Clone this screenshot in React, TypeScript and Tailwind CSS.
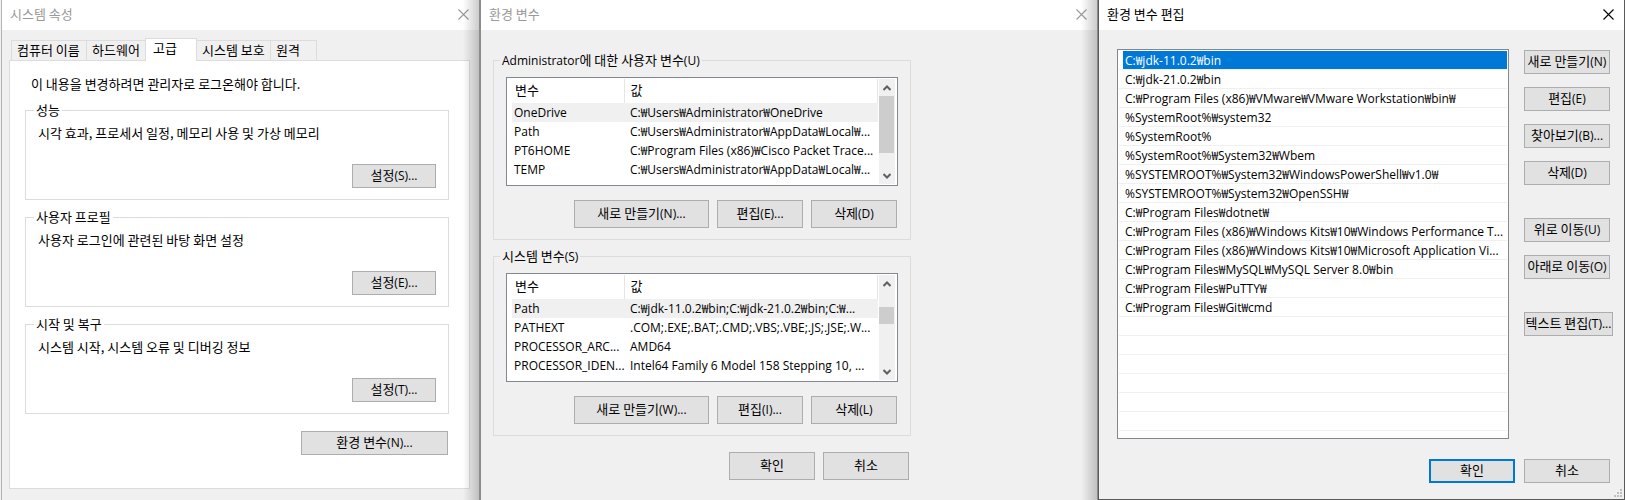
import type { ReactNode } from "react";

const latin = "font-['Open_Sans','Noto_Sans_CJK_KR',sans-serif] text-xs";

function CloseIcon() {
  return (
    <svg width="11" height="11" viewBox="0 0 11 11" fill="none" stroke="currentColor" strokeWidth="1.1" aria-hidden="true">
      <path d="M0.5 0.5 L10.5 10.5 M10.5 0.5 L0.5 10.5" />
    </svg>
  );
}

function TitleBar({ title, active = false }: { title: string; active?: boolean }) {
  return (
    <header className={`flex h-[30px] shrink-0 items-center justify-between bg-white pl-2 pr-2.5 ${active ? "text-black" : "text-[#999]"}`}>
      <h2 className="pb-0.5">{title}</h2>
      <button type="button" aria-label="닫기" className="pb-0.5">
        <CloseIcon />
      </button>
    </header>
  );
}

type PushButtonProps = { label: string; mnemonic?: string; className?: string; primary?: boolean };

function PushButton({ label, mnemonic, className = "w-[86px] h-6", primary = false }: PushButtonProps) {
  return (
    <button
      type="button"
      className={`flex shrink-0 items-center justify-center whitespace-nowrap bg-[#e1e1e1] pb-0.5 ${primary ? "border-2 border-[#0078d7]" : "border border-[#adadad]"} ${className}`}
    >
      <span>
        {label}
        {mnemonic && <span className={latin}>{mnemonic}</span>}
      </span>
    </button>
  );
}

function EdgeShadow() {
  return <div className="pointer-events-none absolute inset-y-0 right-0 w-4 bg-linear-to-r from-transparent to-black/20" />;
}

const tabs = [
  { label: "컴퓨터 이름", width: "w-[76px] border-l" },
  { label: "하드웨어", width: "w-[59px]" },
  { label: "고급", width: "w-[52px]" },
  { label: "시스템 보호", width: "w-[74px]" },
  { label: "원격", width: "w-[46px]" },
];

function SettingsGroup({ title, text, mnemonic }: { title: string; text: string; mnemonic: string }) {
  return (
    <fieldset className="border border-[#dcdcdc] px-3 pb-[11px]">
      <legend className="-ml-1 px-0.5">{title}</legend>
      <p className="mt-[7px]">{text}</p>
      <div className="mt-[23px] flex justify-end">
        <PushButton className="h-6 w-[84px]" label="설정" mnemonic={mnemonic} />
      </div>
    </fieldset>
  );
}

function SystemProperties() {
  return (
    <section className="relative flex min-w-0 flex-col border-l border-r-2 border-l-[#b4b4b4] border-r-[#8c8c8c] bg-[#f0f0f0]">
      <TitleBar title="시스템 속성" />
      <div className="flex flex-1 flex-col pb-[11px] pl-[7px] pr-[9px] pt-2">
        <div role="tablist" className="flex h-[23px] items-end pl-0.5">
          {tabs.map((t) =>
            t.label === "고급" ? (
              <button key={t.label} type="button" role="tab" aria-selected="true" className={`relative z-10 -ml-px h-[23px] border border-b-0 border-[#dcdcdc] bg-white pb-1 pl-[7px] text-left ${t.width}`}>
                {t.label}
              </button>
            ) : (
              <button key={t.label} type="button" role="tab" aria-selected="false" className={`h-[21px] whitespace-nowrap border-r border-t border-[#dcdcdc] pb-0.5 pl-[5px] text-left ${t.width}`}>
                {t.label}
              </button>
            ),
          )}
        </div>
        <div role="tabpanel" className="-mt-px flex-1 border border-[#dcdcdc] bg-white pl-[15px] pr-5 pt-[15px]">
          <p className="pl-1.5">이 내용을 변경하려면 관리자로 로그온해야 합니다.</p>
          <div className="mt-2.5 flex flex-col gap-[9px]">
            <SettingsGroup title="성능" text="시각 효과, 프로세서 일정, 메모리 사용 및 가상 메모리" mnemonic="(S)..." />
            <SettingsGroup title="사용자 프로필" text="사용자 로그인에 관련된 바탕 화면 설정" mnemonic="(E)..." />
            <SettingsGroup title="시작 및 복구" text="시스템 시작, 시스템 오류 및 디버깅 정보" mnemonic="(T)..." />
          </div>
          <div className="mt-[17px] flex justify-end pr-px">
            <PushButton className="h-6 w-[147px]" label="환경 변수" mnemonic="(N)..." />
          </div>
        </div>
      </div>
      <EdgeShadow />
    </section>
  );
}

function Chevron({ down = false }: { down?: boolean }) {
  return (
    <svg width="8" height="6" viewBox="0 0 8 6" fill="none" stroke="#606060" strokeWidth="2" className={down ? "rotate-180" : ""} aria-hidden="true">
      <path d="M0.5 5 L4 1.5 L7.5 5" />
    </svg>
  );
}

type GroupProps = {
  legend: ReactNode;
  label: string;
  rows: [string, string][];
  thumb: string;
  mnemonics: [string, string, string];
};

function VariableGroup({ legend, label, rows, thumb, mnemonics }: GroupProps) {
  return (
    <fieldset className="border border-[#dcdcdc] px-3 pb-[11px]">
      <legend className="-ml-1.5 px-0.5">{legend}</legend>
      <div className="mt-2 flex h-[109px] border border-[#828790] bg-white py-px pl-[5px] pr-0.5">
        <div className="min-w-0 flex-1 overflow-hidden">
          <table aria-label={label} className="w-full table-fixed border-collapse">
            <thead>
              <tr className="h-6 text-left">
                <th className="w-28 border-r border-[#e5e5e5] p-0 pb-0.5 pl-[3px] font-normal">변수</th>
                <th className="border-r border-[#e5e5e5] p-0 pb-0.5 pl-1.5 font-normal">값</th>
              </tr>
            </thead>
            <tbody className={latin}>
              {rows.map(([name, value], i) => (
                <tr key={name} className={`h-[19px] ${i === 0 ? "bg-[#f0f0f0]" : ""}`}>
                  <td className="whitespace-nowrap p-0 pl-0.5">{name}</td>
                  <td className="whitespace-nowrap p-0 pl-1.5">{value}</td>
                </tr>
              ))}
            </tbody>
          </table>
        </div>
        <div className="ml-px flex w-4 shrink-0 flex-col items-center bg-[#f0f0f0]">
          <div className="flex h-[17px] shrink-0 items-center"><Chevron /></div>
          <div className="flex w-full flex-1 flex-col">
            <div className={`w-[15px] bg-[#cdcdcd] ${thumb}`} />
          </div>
          <div className="flex h-[17px] shrink-0 items-center"><Chevron down /></div>
        </div>
      </div>
      <div className="mt-3.5 flex justify-end gap-2 pr-px">
        <PushButton className="h-7 w-[135px]" label="새로 만들기" mnemonic={mnemonics[0]} />
        <PushButton className="h-7 w-[86px]" label="편집" mnemonic={mnemonics[1]} />
        <PushButton className="h-7 w-[86px]" label="삭제" mnemonic={mnemonics[2]} />
      </div>
    </fieldset>
  );
}

const userRows: [string, string][] = [
  ["OneDrive", "C:₩Users₩Administrator₩OneDrive"],
  ["Path", "C:₩Users₩Administrator₩AppData₩Local₩..."],
  ["PT6HOME", "C:₩Program Files (x86)₩Cisco Packet Trace..."],
  ["TEMP", "C:₩Users₩Administrator₩AppData₩Local₩..."],
];

const systemRows: [string, string][] = [
  ["Path", "C:₩jdk-11.0.2₩bin;C:₩jdk-21.0.2₩bin;C:₩..."],
  ["PATHEXT", ".COM;.EXE;.BAT;.CMD;.VBS;.VBE;.JS;.JSE;.W..."],
  ["PROCESSOR_ARC...", "AMD64"],
  ["PROCESSOR_IDEN...", "Intel64 Family 6 Model 158 Stepping 10, ..."],
];

function EnvironmentVariables() {
  return (
    <section className="relative flex min-w-0 flex-col border-r border-[#8c8c8c] bg-[#f0f0f0]">
      <TitleBar title="환경 변수" />
      <div className="flex w-[430px] flex-col gap-2 pl-3 pt-[22px]">
        <VariableGroup
          legend={<><span className={latin}>Administrator</span>에 대한 사용자 변수<span className={latin}>(U)</span></>}
          label="사용자 변수"
          rows={userRows}
          thumb="h-[57px]"
          mnemonics={["(N)...", "(E)...", "(D)"]}
        />
        <VariableGroup
          legend={<>시스템 변수<span className={latin}>(S)</span></>}
          label="시스템 변수"
          rows={systemRows}
          thumb="mt-[15px] h-[17px]"
          mnemonics={["(W)...", "(I)...", "(L)"]}
        />
        <div className="mt-2 flex justify-end gap-2 pr-0.5">
          <PushButton className="h-7 w-[86px]" label="확인" />
          <PushButton className="h-7 w-[86px]" label="취소" />
        </div>
      </div>
      <EdgeShadow />
    </section>
  );
}

const paths = [
  "C:₩jdk-11.0.2₩bin",
  "C:₩jdk-21.0.2₩bin",
  "C:₩Program Files (x86)₩VMware₩VMware Workstation₩bin₩",
  "%SystemRoot%₩system32",
  "%SystemRoot%",
  "%SystemRoot%₩System32₩Wbem",
  "%SYSTEMROOT%₩System32₩WindowsPowerShell₩v1.0₩",
  "%SYSTEMROOT%₩System32₩OpenSSH₩",
  "C:₩Program Files₩dotnet₩",
  "C:₩Program Files (x86)₩Windows Kits₩10₩Windows Performance T...",
  "C:₩Program Files (x86)₩Windows Kits₩10₩Microsoft Application Vi...",
  "C:₩Program Files₩MySQL₩MySQL Server 8.0₩bin",
  "C:₩Program Files₩PuTTY₩",
  "C:₩Program Files₩Git₩cmd",
];

function EditVariable() {
  return (
    <section className="relative flex min-w-0 flex-col border border-t-0 border-[#5a5a5a] bg-[#f0f0f0]">
      <TitleBar title="환경 변수 편집" active />
      <div className="flex pl-[18px] pr-[11px] pt-[19px]">
        <ul role="listbox" aria-label="경로" className={`h-[390px] min-w-0 flex-1 border border-[#828790] bg-white p-px ${latin}`}>
          {paths.map((p, i) => (
            <li key={p} role="option" aria-selected={i === 0} className="flex h-[19px] border-b border-[#f0f0f0] pl-1">
              <span className={`flex-1 whitespace-nowrap pl-0.5 pt-0.5 ${i === 0 ? "bg-[#0078d7] text-white" : ""}`}>{p}</span>
            </li>
          ))}
          {Array.from({ length: 6 }, (_, i) => (
            <li key={i} role="presentation" className="h-[19px] border-b border-[#f0f0f0]" />
          ))}
        </ul>
        <div className="ml-[15px] flex w-[89px] flex-col gap-[13px] pt-px">
          <PushButton label="새로 만들기" mnemonic="(N)" />
          <PushButton label="편집" mnemonic="(E)" />
          <PushButton label="찾아보기" mnemonic="(B)..." />
          <PushButton label="삭제" mnemonic="(D)" />
          <PushButton className="mt-5 h-6 w-[86px]" label="위로 이동" mnemonic="(U)" />
          <PushButton label="아래로 이동" mnemonic="(O)" />
          <PushButton className="mt-5 h-6 w-[89px]" label="텍스트 편집" mnemonic="(T)..." />
        </div>
      </div>
      <div className="mt-5 flex justify-end gap-[9px] pb-4 pr-3.5">
        <PushButton primary label="확인" />
        <PushButton label="취소" />
      </div>
      <svg className="absolute bottom-0.5 right-0.5" width="8" height="8" viewBox="0 0 8 8" fill="#bfbfbf" aria-hidden="true">
        <path d="M6 0h2v2h-2z M3 3h2v2h-2z M6 3h2v2h-2z M0 6h2v2h-2z M3 6h2v2h-2z M6 6h2v2h-2z" />
      </svg>
    </section>
  );
}

export default function App() {
  return (
    <main className="grid min-h-screen grid-cols-[480fr_617fr_527fr] bg-[#f0f0f0] pl-px font-['Noto_Sans_CJK_KR',sans-serif] text-[13px] leading-4 text-black">
      <SystemProperties />
      <EnvironmentVariables />
      <EditVariable />
    </main>
  );
}
